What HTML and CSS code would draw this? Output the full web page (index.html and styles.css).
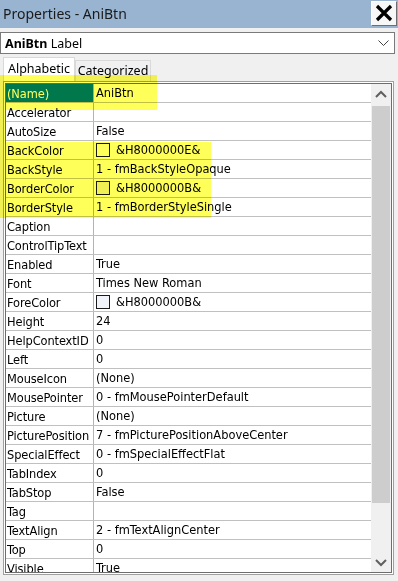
FILE: index.html
```html
<!DOCTYPE html>
<html lang="en">
<head>
    <meta charset="UTF-8">
    <meta name="viewport" content="width=device-width, initial-scale=1.0">
    <title>Properties - AniBtn</title>
    <link rel="stylesheet" href="styles.css">
</head>
<body>

<div class="titlebar">
    <span class="title">Properties - AniBtn</span>
    <div class="close-btn">
        <svg width="24" height="23" viewBox="0 0 24 23">
            <path d="M5 4 L19 18 M19 4 L5 18" stroke="#000" stroke-width="3.2" fill="none"/>
        </svg>
    </div>
</div>

<div class="obj-select">
    <span><b>AniBtn</b> Label</span>
    <svg width="11" height="7" viewBox="0 0 11 7">
        <path d="M0.5 0.5 L5.5 5.5 L10.5 0.5" stroke="#444" stroke-width="1" fill="none"/>
    </svg>
</div>

<div class="tabs">
    <div class="tab active">Alphabetic</div>
    <div class="tab">Categorized</div>
</div>

<div class="frame">
    <div class="frame-inner">
        <div class="grid">
            <div class="row"><div class="name selected">(Name)</div><div class="value">AniBtn</div></div>
            <div class="row"><div class="name">Accelerator</div><div class="value"></div></div>
            <div class="row"><div class="name">AutoSize</div><div class="value">False</div></div>
            <div class="row"><div class="name">BackColor</div><div class="value"><span class="swatch white"></span>&amp;H8000000E&amp;</div></div>
            <div class="row"><div class="name">BackStyle</div><div class="value">1 - fmBackStyleOpaque</div></div>
            <div class="row"><div class="name">BorderColor</div><div class="value"><span class="swatch face"></span>&amp;H8000000B&amp;</div></div>
            <div class="row"><div class="name">BorderStyle</div><div class="value">1 - fmBorderStyleSingle</div></div>
            <div class="row"><div class="name">Caption</div><div class="value"></div></div>
            <div class="row"><div class="name">ControlTipText</div><div class="value"></div></div>
            <div class="row"><div class="name">Enabled</div><div class="value">True</div></div>
            <div class="row"><div class="name">Font</div><div class="value">Times New Roman</div></div>
            <div class="row"><div class="name">ForeColor</div><div class="value"><span class="swatch pale"></span>&amp;H8000000B&amp;</div></div>
            <div class="row"><div class="name">Height</div><div class="value">24</div></div>
            <div class="row"><div class="name">HelpContextID</div><div class="value">0</div></div>
            <div class="row"><div class="name">Left</div><div class="value">0</div></div>
            <div class="row"><div class="name">MouseIcon</div><div class="value">(None)</div></div>
            <div class="row"><div class="name">MousePointer</div><div class="value">0 - fmMousePointerDefault</div></div>
            <div class="row"><div class="name">Picture</div><div class="value">(None)</div></div>
            <div class="row"><div class="name">PicturePosition</div><div class="value">7 - fmPicturePositionAboveCenter</div></div>
            <div class="row"><div class="name">SpecialEffect</div><div class="value">0 - fmSpecialEffectFlat</div></div>
            <div class="row"><div class="name">TabIndex</div><div class="value">0</div></div>
            <div class="row"><div class="name">TabStop</div><div class="value">False</div></div>
            <div class="row"><div class="name">Tag</div><div class="value"></div></div>
            <div class="row"><div class="name">TextAlign</div><div class="value">2 - fmTextAlignCenter</div></div>
            <div class="row"><div class="name">Top</div><div class="value">0</div></div>
            <div class="row"><div class="name">Visible</div><div class="value">True</div></div>
        </div>
        <div class="vscroll">
            <div class="arrow">
                <svg width="12" height="8" viewBox="0 0 12 8"><path d="M1 7 L6 2 L11 7" stroke="#606060" stroke-width="2" fill="none"/></svg>
            </div>
            <div class="thumb"></div>
            <div class="track"></div>
            <div class="arrow">
                <svg width="12" height="8" viewBox="0 0 12 8"><path d="M1 1 L6 6 L11 1" stroke="#606060" stroke-width="2" fill="none"/></svg>
            </div>
        </div>
    </div>
</div>

<!-- highlighter marks -->
<div class="marker mark-name"></div>
<div class="marker mark-strip"></div>
<div class="marker mark-border"></div>

</body>
</html>
```

FILE: styles.css
```css
body {
    margin: 0;
    width: 398px;
    height: 581px;
    overflow: hidden;
    position: relative;
    background-color: #f0f0f0;
    font-family: 'Noto Sans', 'Open Sans', sans-serif;
    color: #000;
}
.titlebar {
    height: 28px;
    background-color: #99b4d1;
    display: flex;
    justify-content: space-between;
    align-items: flex-start;
}
.title {
    font-size: 14px;
    line-height: 27px;
    padding-left: 3px;
    color: #1a1a1a;
}
.close-btn {
    width: 24px;
    height: 23px;
    margin: 1px 1px 0 0;
    background-color: #f7f7f7;
    border: 1px solid;
    border-color: #ffffff #6e6e6e #6e6e6e #ffffff;
}
.close-btn svg {
    display: block;
}
.obj-select {
    margin: 4px 3px 0 0;
    height: 20px;
    border: 1px solid #7a7a7a;
    background-color: #fff;
    display: flex;
    justify-content: space-between;
    align-items: center;
    padding: 0 5px 0 4px;
    font-size: 12.5px;
}
.tabs {
    display: flex;
    align-items: flex-end;
    height: 24px;
    margin-top: 3px;
    padding-left: 3px;
    font-size: 12.5px;
}
.tab {
    height: 20px;
    width: 74px;
    text-align: center;
    line-height: 20px;
    border: 1px solid #d9d9d9;
    border-bottom: none;
    background-color: #f0f0f0;
}
.tab.active {
    width: 70px;
    height: 23px;
    line-height: 22px;
    background-color: #fff;
}
.frame {
    margin: 0 4px 0 3px;
    border: 1px solid #a0a0a0;
    padding: 1px;
    background-color: #fff;
}
.frame-inner {
    border: 1px solid #6e6e6e;
    display: flex;
    height: 488px;
}
.grid {
    flex: 1;
    overflow: hidden;
    font-family: 'DejaVu Sans Condensed', 'DejaVu Sans', sans-serif;
    font-size: 12.7px;
}
.row {
    display: grid;
    grid-template-columns: 88px 1fr;
    height: 18px;
    border-bottom: 1px solid #c0c0c0;
}
.name {
    border-right: 1px solid #b4b4b4;
    padding-left: 1px;
    line-height: 20px;
    white-space: nowrap;
    overflow: hidden;
    letter-spacing: -0.1px;
}
.name.selected {
    background-color: #0078d7;
    color: #fff;
}
.value {
    padding-left: 2px;
    line-height: 20px;
    white-space: nowrap;
    display: flex;
    align-items: center;
    overflow: hidden;
}
.swatch {
    width: 12px;
    height: 12px;
    border: 1px solid #1a1a1a;
    margin-right: 6px;
}
.swatch.white {
    background-color: #fff;
}
.swatch.face {
    background-color: #f0f0f0;
}
.swatch.pale {
    background-color: #f0f4fa;
}
.vscroll {
    width: 20px;
    background-color: #f0f0f0;
    display: flex;
    flex-direction: column;
}
.arrow {
    height: 19px;
    display: flex;
    align-items: center;
    justify-content: center;
}
.thumb {
    height: 397px;
    margin: 3px 1px 0 1px;
    background-color: #cdcdcd;
}
.track {
    flex: 1;
}
.marker {
    position: absolute;
    background-color: #ffff5a;
    mix-blend-mode: multiply;
}
.mark-name {
    left: 0;
    top: 75px;
    width: 157px;
    height: 35px;
}
.mark-strip {
    left: 0;
    top: 110px;
    width: 6px;
    height: 32px;
}
.mark-border {
    left: 0;
    top: 142px;
    width: 211px;
    height: 76px;
}
```
